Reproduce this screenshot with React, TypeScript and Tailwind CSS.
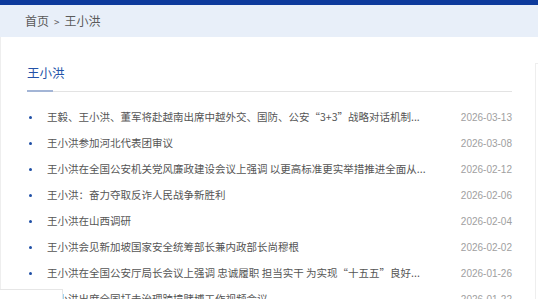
import React from 'react';

const NEWS = [
  { title: '王毅、王小洪、董军将赴越南出席中越外交、国防、公安“3+3”战略对话机制...', date: '2026-03-13' },
  { title: '王小洪参加河北代表团审议', date: '2026-03-08' },
  { title: '王小洪在全国公安机关党风廉政建设会议上强调 以更高标准更实举措推进全面从...', date: '2026-02-12' },
  { title: '王小洪：奋力夺取反诈人民战争新胜利', date: '2026-02-06' },
  { title: '王小洪在山西调研', date: '2026-02-04' },
  { title: '王小洪会见新加坡国家安全统筹部长兼内政部长尚穆根', date: '2026-02-02' },
  { title: '王小洪在全国公安厅局长会议上强调 忠诚履职 担当实干 为实现“十五五”良好...', date: '2026-01-26' },
  { title: '王小洪出席全国打击治理跨境赌博工作视频会议', date: '2026-01-22' },
];

const font = "font-['Microsoft_YaHei','Noto_Sans_CJK_SC',sans-serif]";

export default function App() {
  return (
    <div className={`relative w-[538px] h-[299px] overflow-hidden bg-white ${font}`}>
      {/* Top bar */}
      <div className="h-[5px] bg-[#0d3a9c]" />

      {/* Breadcrumb */}
      <div className="h-[32px] bg-[#e8eff9] flex items-center pl-[25px] text-[12px] text-[#5a5a5a]">
        <span>首页</span>
        <span className="mx-[5px] text-[10px]">&gt;</span>
        <span>王小洪</span>
      </div>

      <div className="flex">
        {/* Main list */}
        <div className="w-[530px] shrink-0 pl-[26px] pr-[18px] pt-[26px] border-l border-[#eeeeee]">
          <h2 className="text-[12.5px] leading-[20px] text-[#2352a8]">王小洪</h2>
          <div className="relative mt-[8px] h-px bg-[#e3e3e3]">
            <div className="absolute left-0 -top-px w-[26px] h-[2px] bg-[#a3b5d6]" />
          </div>

          <ul className="pt-[12px]">
            {NEWS.map((item) => (
              <li key={item.date} className="flex items-center h-[26px]">
                <span className="w-[3px] h-[3px] rounded-full bg-[#1f4fa5] ml-[2px] mr-[15px] shrink-0" />
                <span className="flex-1 whitespace-nowrap overflow-hidden text-[10.5px] text-[#555]">
                  {item.title}
                </span>
                <span className="shrink-0 text-[10px] text-[#a0a0a0] font-['Liberation_Sans',sans-serif]">
                  {item.date}
                </span>
              </li>
            ))}
          </ul>
        </div>

        {/* Sidebar edge */}
        <div className="ml-[5px] mt-[26px] flex-1 border-l border-t border-[#eeeeee]" />
      </div>

      {/* Floating box bottom-left */}
      <div className="absolute left-0 top-[289px] w-[63px] h-[20px] bg-white border-t border-r border-[#e6e6e6]" />
    </div>
  );
}
